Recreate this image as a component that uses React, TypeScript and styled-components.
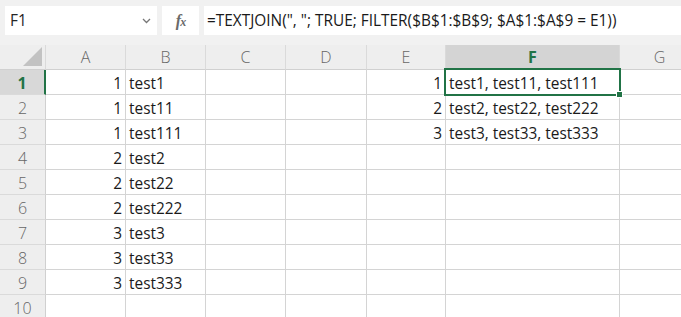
import styled, { createGlobalStyle } from "styled-components";

const GlobalStyle = createGlobalStyle`
  html, body {
    margin: 0;
    padding: 0;
    background: #ffffff;
    overflow: hidden;
  }
  body {
    font-family: "Open Sans", "Noto Sans", sans-serif;
  }
`;

const Page = styled.div`
  width: 681px;
  height: 317px;
  overflow: hidden;
  background: #fff;
`;

const FormulaBar = styled.div`
  height: 45px;
  box-sizing: border-box;
  padding: 6px 0 10px 5px;
  display: flex;
  gap: 5px;
  background: #f1f1f1;
`;

const NameBox = styled.div`
  width: 152px;
  background: #fff;
  display: flex;
  align-items: center;
  justify-content: space-between;
  padding: 0 6px 0 5px;
  box-sizing: border-box;
  font-size: 15.4px;
  color: #262626;
`;

const Chevron = styled.svg`
  width: 9px;
  height: 6px;
`;

const FxBox = styled.div`
  width: 37px;
  background: #fff;
  display: flex;
  align-items: center;
  justify-content: center;
  font-family: "Liberation Serif", serif;
  font-style: italic;
  font-weight: bold;
  color: #6a6a6a;
  font-size: 16px;
  letter-spacing: -1px;

  span {
    font-size: 12px;
    margin-top: 4px;
  }
`;

const FormulaInput = styled.div`
  flex: 1;
  background: #fff;
  display: flex;
  align-items: center;
  padding-left: 3px;
  font-size: 15.4px;
  color: #1a1a1a;
  white-space: nowrap;
  overflow: hidden;
`;

const Sheet = styled.div`
  display: grid;
  grid-template-columns: 46px 80px 80px 80px 81px 79px 174px 80px;
  grid-template-rows: 25px;
  grid-auto-rows: 25px;
`;

const Corner = styled.div`
  background: #eeeeee;
  border-right: 1px solid #dadada;
  border-bottom: 1px solid #d0d0d0;
  box-sizing: border-box;
  display: flex;
  align-items: flex-end;
  justify-content: flex-end;
  padding: 0 3px 3px 0;
`;

const CornerTriangle = styled.div`
  width: 0;
  height: 0;
  border-left: 19px solid transparent;
  border-bottom: 19px solid #c2c2c2;
`;

const ColHeader = styled.div<{ $active?: boolean }>`
  background: ${(p) => (p.$active ? "#d4d4d4" : "#eeeeee")};
  border-right: 1px solid #dadada;
  border-bottom: 1px solid #d0d0d0;
  box-sizing: border-box;
  display: flex;
  align-items: center;
  justify-content: center;
  font-size: 16px;
  font-weight: ${(p) => (p.$active ? 700 : 300)};
  color: ${(p) => (p.$active ? "#217346" : "#666666")};
`;

const RowHeader = styled.div<{ $active?: boolean }>`
  background: ${(p) => (p.$active ? "#d8d8d8" : "#eeeeee")};
  border-right: ${(p) => (p.$active ? "2px solid #217346" : "1px solid #d0d0d0")};
  border-bottom: 1px solid #dadada;
  box-sizing: border-box;
  display: flex;
  align-items: center;
  justify-content: center;
  padding-top: 1px;
  font-size: 16px;
  font-weight: ${(p) => (p.$active ? 700 : 300)};
  color: ${(p) => (p.$active ? "#217346" : "#666666")};
`;

const Cell = styled.div<{ $num?: boolean; $selected?: boolean }>`
  position: relative;
  border-right: 1px solid #d4d4d4;
  border-bottom: 1px solid #d4d4d4;
  box-sizing: border-box;
  display: flex;
  align-items: center;
  justify-content: ${(p) => (p.$num ? "flex-end" : "flex-start")};
  padding: 2px 3px 0 3px;
  font-size: 15.4px;
  color: #1a1a1a;
  white-space: nowrap;

  ${(p) =>
    p.$selected &&
    `
    &::after {
      content: "";
      position: absolute;
      left: -2px;
      top: -2px;
      right: -2px;
      bottom: -2px;
      border: 2px solid #217346;
      pointer-events: none;
      z-index: 1;
    }
    &::before {
      content: "";
      position: absolute;
      right: -4px;
      bottom: -4px;
      width: 5px;
      height: 5px;
      background: #217346;
      border: 1px solid #fff;
      z-index: 2;
    }
  `}
`;

const columns = ["A", "B", "C", "D", "E", "F", "G"];

const colA = [1, 1, 1, 2, 2, 2, 3, 3, 3];
const colB = ["test1", "test11", "test111", "test2", "test22", "test222", "test3", "test33", "test333"];
const colE = [1, 2, 3];
const colF = ["test1, test11, test111", "test2, test22, test222", "test3, test33, test333"];

export default function App() {
  const rows = Array.from({ length: 10 }, (_, i) => i);

  return (
    <Page>
      <GlobalStyle />
      <FormulaBar>
        <NameBox>
          F1
          <Chevron viewBox="0 0 9 6">
            <path d="M1 1 L4.5 4.5 L8 1" fill="none" stroke="#777" strokeWidth="1.3" />
          </Chevron>
        </NameBox>
        <FxBox>
          f<span>x</span>
        </FxBox>
        <FormulaInput>=TEXTJOIN(", "; TRUE; FILTER($B$1:$B$9; $A$1:$A$9 = E1))</FormulaInput>
      </FormulaBar>
      <Sheet>
        <Corner>
          <CornerTriangle />
        </Corner>
        {columns.map((c) => (
          <ColHeader key={c} $active={c === "F"}>
            {c}
          </ColHeader>
        ))}
        {rows.map((i) => [
          <RowHeader key={`h${i}`} $active={i === 0}>
            {i + 1}
          </RowHeader>,
          <Cell key={`a${i}`} $num>
            {colA[i] ?? ""}
          </Cell>,
          <Cell key={`b${i}`}>{colB[i] ?? ""}</Cell>,
          <Cell key={`c${i}`} />,
          <Cell key={`d${i}`} />,
          <Cell key={`e${i}`} $num>
            {colE[i] ?? ""}
          </Cell>,
          <Cell key={`f${i}`} $selected={i === 0}>
            {colF[i] ?? ""}
          </Cell>,
          <Cell key={`g${i}`} />,
        ])}
      </Sheet>
    </Page>
  );
}
